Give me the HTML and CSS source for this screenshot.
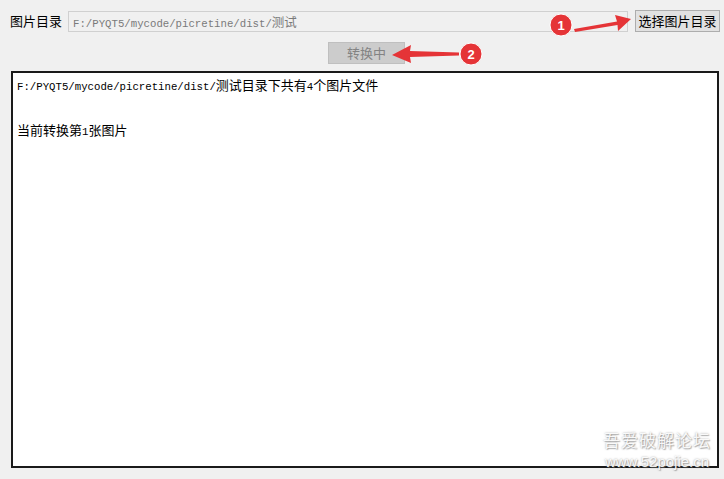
FILE: index.html
```html
<!DOCTYPE html>
<html lang="zh-CN">
<head>
  <meta charset="UTF-8">
  <title>图片转换</title>
  <link rel="stylesheet" href="styles.css">
</head>
<body>
  <div class="window">
    <div class="row-dir">
      <span class="label">图片目录</span>
      <div class="path-input"><span class="mono">F:/PYQT5/mycode/picretine/dist/</span>测试</div>
      <button class="btn-pick">选择图片目录</button>
    </div>

    <div class="row-convert">
      <button class="btn-convert" disabled>转换中</button>
    </div>

    <div class="log">
      <div class="log-line"><span class="mono">F:/PYQT5/mycode/picretine/dist/</span>测试目录下共有<span class="mono">4</span>个图片文件</div>
      <div class="log-line"></div>
      <div class="log-line">当前转换第<span class="mono">1</span>张图片</div>
    </div>

    <!-- screenshot annotations -->
    <svg class="marks" width="724" height="479" viewBox="0 0 724 479">
      <polygon points="574,29 617,21.5 615,15 631,19 618,31 617.5,25 575,32" fill="#e53437"/>
      <circle cx="561" cy="25" r="11" fill="#e53437" stroke="#fff" stroke-width="1"/>
      <text x="561" y="29.5" class="num">1</text>

      <polygon points="459,52.5 410,51 411,45 392,55 411,63 410,57 459,55.5" fill="#e53437"/>
      <circle cx="471" cy="54" r="11" fill="#e53437" stroke="#fff" stroke-width="1"/>
      <text x="471" y="58.5" class="num">2</text>
    </svg>

    <div class="watermark">
      <div class="wm-title">吾爱破解论坛</div>
      <div class="wm-url">www.52pojie.cn</div>
    </div>
  </div>
</body>
</html>
```

FILE: styles.css
```css
html, body {
  margin: 0;
  padding: 0;
}
body {
  background-color: #f0f0f0;
  font-family: "Noto Sans CJK SC", "Noto Sans", sans-serif;
  font-size: 13px;
  color: #000;
}
.window {
  position: relative;
  width: 724px;
  height: 479px;
  overflow: hidden;
}
.mono {
  font-family: "Liberation Mono", "DejaVu Sans Mono", monospace;
  font-size: 10.7px;
}
.row-dir {
  display: flex;
  align-items: flex-start;
  padding: 10px 4px 0 10px;
  height: 22px;
}
.label {
  width: 58px;
  line-height: 24px;
  margin-top: -1px;
}
.path-input {
  box-sizing: border-box;
  width: 560px;
  height: 21px;
  margin-top: 1px;
  border: 1px solid #d0d0d0;
  background-color: #f0f0f0;
  color: #7a7a7a;
  padding: 0 4px;
  line-height: 19px;
  font-size: 12.5px;
}
.btn-pick {
  box-sizing: border-box;
  width: 85px;
  height: 22px;
  margin-left: 7px;
  padding: 0;
  border: 1px solid #adadad;
  background-color: #e1e1e1;
  font-family: inherit;
  font-size: 13px;
  color: #000;
  line-height: 20px;
}
.row-convert {
  display: flex;
  padding: 10px 0 0 328px;
}
.btn-convert {
  box-sizing: border-box;
  width: 77px;
  height: 22px;
  padding: 0;
  border: 1px solid #bfbfbf;
  background-color: #cccccc;
  color: #838383;
  font-family: inherit;
  font-size: 13px;
  line-height: 20px;
}
.log {
  box-sizing: border-box;
  margin: 7px 0 0 11px;
  width: 708px;
  height: 397px;
  border: 2px solid #1a1a1a;
  background-color: #fff;
  padding: 1px 4px;
}
.log-line {
  height: 22.5px;
  line-height: 22.5px;
  white-space: nowrap;
}
.marks {
  position: absolute;
  left: 0;
  top: 0;
  pointer-events: none;
}
.num {
  fill: #fff;
  font-family: "Liberation Sans", Arial, sans-serif;
  font-size: 13px;
  font-weight: bold;
  text-anchor: middle;
}
.watermark {
  position: absolute;
  left: 603px;
  top: 430px;
  color: rgba(255, 255, 255, 0.92);
  text-shadow: 0 0 2px rgba(90, 90, 90, 0.55), 1px 1px 1px rgba(120, 120, 120, 0.5);
  text-align: center;
}
.wm-title {
  font-size: 17px;
  line-height: 20px;
  letter-spacing: 1px;
}
.wm-url {
  margin-top: 3px;
  font-family: "Liberation Sans", Arial, sans-serif;
  font-size: 15px;
  line-height: 17px;
}
```
